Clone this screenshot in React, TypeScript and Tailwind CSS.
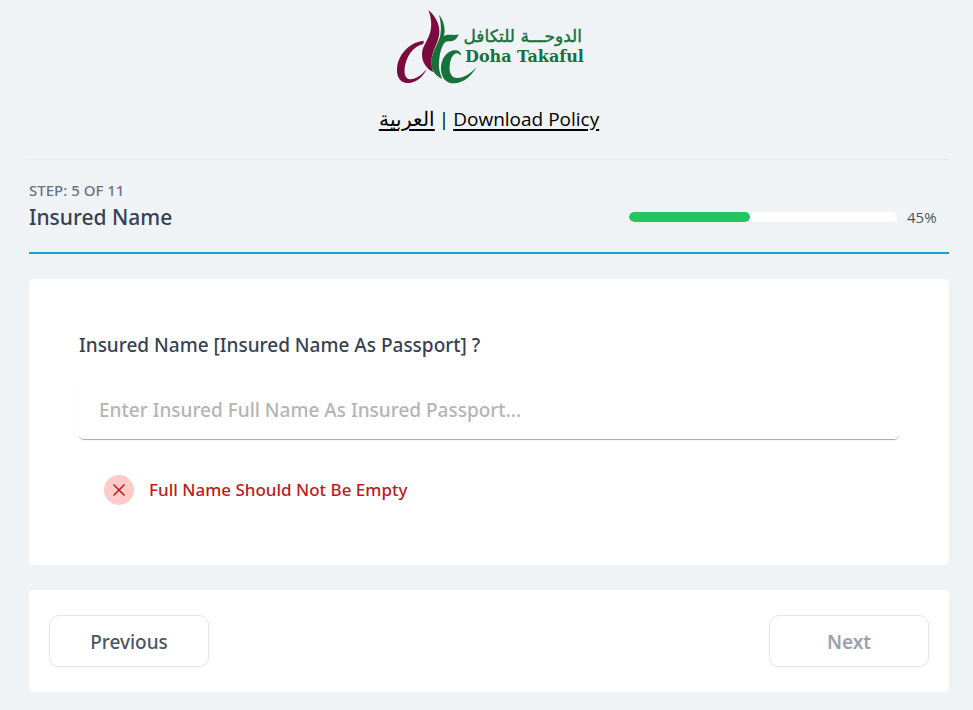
import { useState } from "react";

const TOTAL_STEPS = 11;
const CURRENT_STEP = 5;
const PROGRESS = 45;

function Logo() {
  return (
    <svg viewBox="0 0 190 80" className="h-20 w-[190px]" role="img" aria-label="Doha Takaful">
      <g transform="translate(-4 -2) scale(0.3333)">
        <g fill="#7b0a3f">
          <path d="M115 15C136 32 150 58 148 84C146 112 128 135 125 160C123 178 126 190 130 202C108 190 95 170 96 146C97 122 117 104 122 76C126 52 122 34 115 15Z" />
          <path d="M101 107C55 112 22 152 21 194C20 222 36 236 60 234C82 231 100 213 110 193C94 211 76 224 60 223C46 222 42 207 44 190C48 156 68 124 100 117Z" />
        </g>
        <g fill="#17713a">
          <path d="M147 29C158 42 164 60 164 78C164 84 163 88 161 93C176 85 190 93 206 88C201 102 192 110 178 109C168 108 163 112 158 122C150 140 149 152 147 172C145 190 150 208 157 222C133 210 122 193 124 168C126 138 146 116 151 90C155 68 152 48 147 29Z" />
          <path d="M213 151C213 139 203 134 190 136C166 141 151 168 153 194C155 220 169 236 194 235C224 233 246 210 260 186C240 207 221 219 203 219C184 219 177 203 179 182C181 161 190 145 201 145C208 145 208 151 213 151Z" />
        </g>
      </g>
      <text x="188" y="35" textAnchor="end" direction="ltr" fill="#17713a" stroke="#17713a" strokeWidth="0.4" className="font-['DejaVu_Sans',sans-serif] text-[17px]">
        الدوحـــة للتكافل
      </text>
      <text x="71" y="55" fill="#17713a" className="font-['DejaVu_Serif',serif] text-[16px] font-bold">
        Doha Takaful
      </text>
    </svg>
  );
}

export default function App() {
  const [name, setName] = useState("");

  return (
    <div className="min-h-screen bg-[#eff3f6] pt-[7px] pr-6 pb-[18px] pl-[29px] font-['Noto_Sans','Open_Sans',sans-serif] text-[#374151]">
      <header className="flex flex-col items-center border-b border-gray-200 pb-[25px]">
        <Logo />
        <nav className="mt-[17px] flex items-center gap-1 font-['Open_Sans','Noto_Sans',sans-serif] text-[19px] leading-[30px] text-black">
          <a href="#ar" lang="ar" className="text-xl leading-[30px] underline decoration-2 underline-offset-3">العربية</a>
          <span>|</span>
          <a href="#policy" className="underline decoration-2 underline-offset-3">Download Policy</a>
        </nav>
      </header>

      <main>
        <div className="flex items-center justify-between border-b-2 border-[#06a5d8] pt-5 pb-[18px]">
          <div>
            <p className="text-[15px] leading-5 font-medium text-gray-500">
              STEP: {CURRENT_STEP} OF {TOTAL_STEPS}
            </p>
            <h1 className="text-[21px] leading-[34px] font-medium text-[#374151]">Insured Name</h1>
          </div>
          <div className="flex w-80 items-center pt-5">
            <div
              role="progressbar"
              aria-label="Progress"
              aria-valuenow={PROGRESS}
              aria-valuemin={0}
              aria-valuemax={100}
              className="mr-2.5 h-2.5 flex-1 overflow-hidden rounded-full bg-white"
            >
              <div className="h-full rounded-full bg-[#22c55e]" style={{ width: `${PROGRESS}%` }} />
            </div>
            <span className="w-[42px] font-['Open_Sans','Noto_Sans',sans-serif] text-[15px] leading-5 text-gray-600">{PROGRESS}%</span>
          </div>
        </div>

        <section className="mt-[25px] rounded-[5px] bg-white px-[50px] pt-[50px] pb-[60px]">
          <label htmlFor="insured-name" className="block text-[19px] leading-8 font-medium text-[#374151]">
            Insured Name [Insured Name As Passport] ?
          </label>
          <input
            id="insured-name"
            type="text"
            value={name}
            onChange={(event) => setName(event.target.value)}
            placeholder="Enter Insured Full Name As Insured Passport..."
            aria-describedby="insured-name-error"
            className="mt-5 block h-[59px] w-full rounded-[5px] border-b border-[#a0aec0] bg-white px-5 text-[19px] font-medium shadow-xs outline-none placeholder:text-[#b4b4b4]"
          />
          <div id="insured-name-error" role="alert" className="mt-[35px] ml-[25px] flex items-center gap-[15px] text-[#b91c1c]">
            <span className="flex size-[30px] items-center justify-center rounded-full bg-[#fecaca]">
              <svg viewBox="0 0 20 20" className="size-5" fill="none" stroke="currentColor" strokeWidth="1.5" aria-hidden="true">
                <path d="M4.5 4.5L15.5 15.5M15.5 4.5L4.5 15.5" />
              </svg>
            </span>
            <span className="text-[17px] leading-[30px] font-medium">Full Name Should Not Be Empty</span>
          </div>
        </section>

        <footer className="mt-[25px] flex justify-between rounded-[5px] bg-white px-5 py-[25px]">
          <button type="button" className="h-[52px] w-40 rounded-[10px] border border-gray-200 bg-white pt-0.5 text-[19px] font-medium text-gray-600 shadow-xs">
            Previous
          </button>
          <button type="button" disabled className="h-[52px] w-40 rounded-[10px] border border-gray-200 bg-white pt-0.5 text-[19px] font-semibold text-gray-400 shadow-xs">
            Next
          </button>
        </footer>
      </main>
    </div>
  );
}
